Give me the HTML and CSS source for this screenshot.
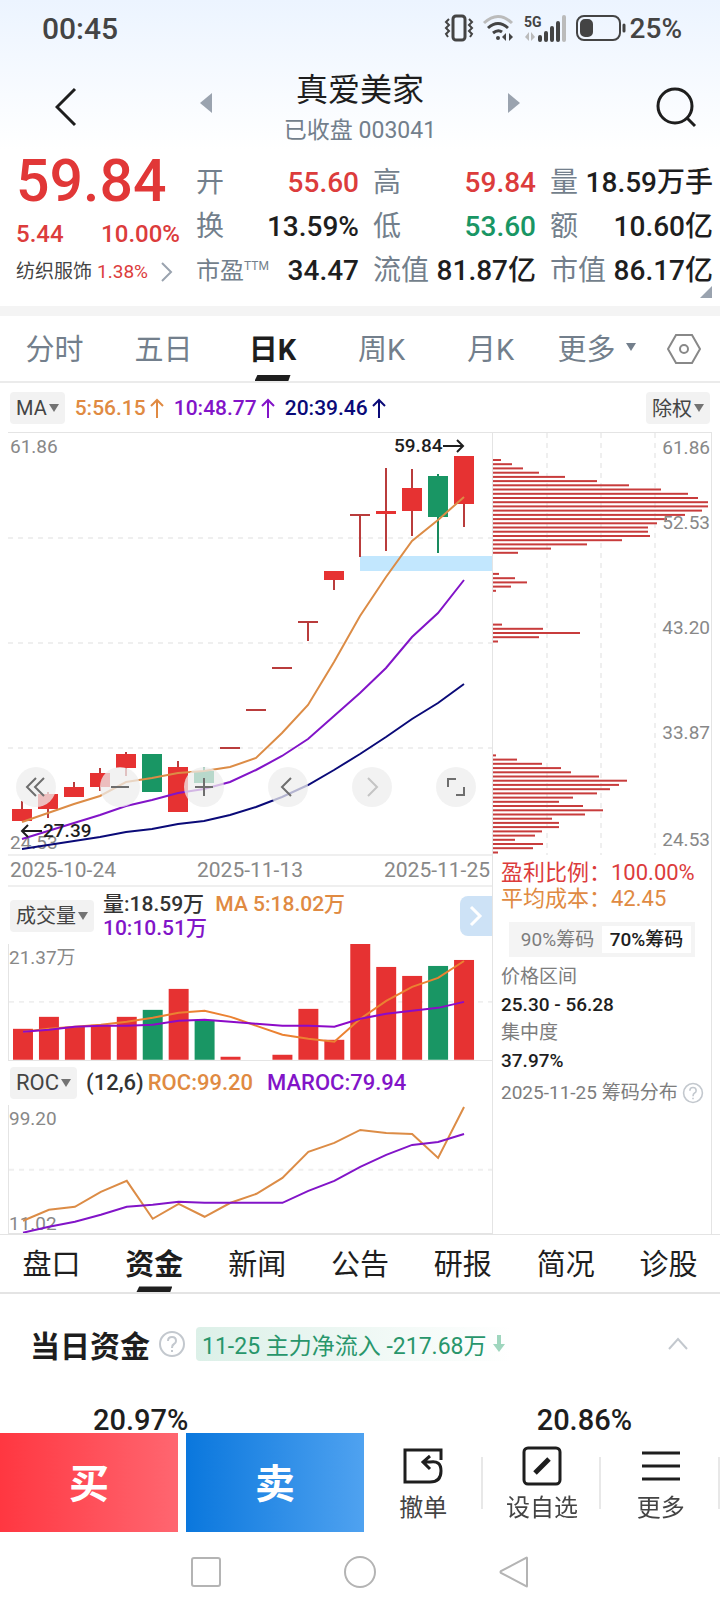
FILE: index.html
```
<!DOCTYPE html>
<html lang="zh-CN">
<head>
  <meta charset="UTF-8">
  <meta name="viewport" content="width=device-width, initial-scale=1">
  <title>真爱美家 003041</title>
  <link rel="stylesheet" href="styles.css">
</head>
<body>

<div class="status-bar">
  <span>00:45</span>
  <div class="status-icons">
    <svg width="30" height="28" viewBox="0 0 30 28" fill="none" stroke="#444" stroke-width="3">
      <rect x="9" y="2" width="12" height="24" rx="3"/>
      <path d="M5 5l-3 3 3 3-3 3 3 3-3 3 2 3M25 5l3 3-3 3 3 3-3 3 3 3-2 3" stroke-width="2"/>
    </svg>
    <svg width="34" height="28" viewBox="0 0 34 28" fill="none" stroke="#444" stroke-width="3">
      <path d="M2 9q14-13 28 0" stroke="#bbb"/>
      <path d="M6 14q10-9 20 0M11 19q5-4 9-1"/>
      <circle cx="16" cy="24" r="2" fill="#444" stroke="none"/>
      <path d="M24 19v8l-4-4zM27 19v8l4-4z" fill="#444" stroke="none"/>
    </svg>
    <svg width="44" height="28" viewBox="0 0 44 28">
      <text x="0" y="13" class="net-label">5G</text>
      <path d="M5 18v9l-4-4zM7 18v9l4-4z" fill="#bbb"/>
      <path d="M16 26v-3M22 26v-7M28 26V14M34 26V9" stroke="#444" stroke-width="4" stroke-linecap="round"/>
      <path d="M40 26V3" stroke="#bbb" stroke-width="4" stroke-linecap="round"/>
    </svg>
    <svg width="50" height="28" viewBox="0 0 50 28" fill="none" stroke="#444" stroke-width="2">
      <rect x="1" y="2" width="43" height="24" rx="7"/>
      <rect x="5" y="6" width="11" height="16" rx="4" fill="#444"/>
      <path d="M48 11v6" stroke-width="3" stroke-linecap="round"/>
    </svg>
    <span>25%</span>
  </div>
</div>

<header class="header">
  <button class="back" aria-label="返回"><svg width="22" height="40" viewBox="0 0 22 40"><path d="M20 2L2 20l18 18"/></svg></button>
  <button aria-label="上一只"><svg width="12" height="20" viewBox="0 0 12 20"><path d="M12 0v20L0 10z" class="tri"/></svg></button>
  <div class="title">
    <h1>真爱美家</h1>
    <p>已收盘 003041</p>
  </div>
  <button aria-label="下一只"><svg width="12" height="20" viewBox="0 0 12 20"><path d="M0 0v20l12-10z" class="tri"/></svg></button>
  <button class="search" aria-label="搜索"><svg width="42" height="42" viewBox="0 0 42 42"><circle cx="19" cy="19" r="17"/><path d="M31 31l8 8"/></svg></button>
</header>

<section class="quote">
  <div class="price-box">
    <div class="price">59.84</div>
    <div class="change"><span>5.44</span><span>10.00%</span></div>
    <a class="industry" href="#">纺织服饰 <span class="red">1.38%</span>
      <svg width="12" height="20" viewBox="0 0 12 20"><path d="M1 1l9 9-9 9"/></svg>
    </a>
  </div>
  <dl>
    <div><dt>开</dt><dd class="red">55.60</dd></div>
    <div><dt>高</dt><dd class="red">59.84</dd></div>
    <div><dt>量</dt><dd>18.59万手</dd></div>
    <div><dt>换</dt><dd>13.59%</dd></div>
    <div><dt>低</dt><dd class="green">53.60</dd></div>
    <div><dt>额</dt><dd>10.60亿</dd></div>
    <div><dt class="small">市盈<sup>TTM</sup></dt><dd>34.47</dd></div>
    <div><dt>流值</dt><dd>81.87亿</dd></div>
    <div><dt>市值</dt><dd>86.17亿</dd></div>
  </dl>
  <svg class="corner" width="12" height="12" viewBox="0 0 12 12"><path d="M12 0v12H0z"/></svg>
</section>

<nav class="period-tabs">
  <button>分时</button>
  <button>五日</button>
  <button class="active">日K</button>
  <button>周K</button>
  <button>月K</button>
  <button class="more">更多<i class="caret"></i></button>
  <button class="setting" aria-label="设置"><svg width="34" height="30" viewBox="0 0 34 30"><path d="M9 1h16l8 14-8 14H9L1 15z"/><circle cx="17" cy="15" r="4"/></svg></button>
</nav>

<div class="ma-row">
  <button class="chip">MA<i class="caret"></i></button>
  <span class="orange">5:56.15<svg class="up" width="14" height="20" viewBox="0 0 14 20"><path d="M7 20V2M1 8l6-6 6 6"/></svg></span>
  <span class="purple">10:48.77<svg class="up" width="14" height="20" viewBox="0 0 14 20"><path d="M7 20V2M1 8l6-6 6 6"/></svg></span>
  <span class="navy">20:39.46<svg class="up" width="14" height="20" viewBox="0 0 14 20"><path d="M7 20V2M1 8l6-6 6 6"/></svg></span>
  <button class="chip adjust">除权<i class="caret"></i></button>
</div>

<main class="charts">
  <div class="left">
    <div class="kline">
      <svg id="kline" viewBox="0 0 484 421">
        <path class="grid" d="M0 105H484M0 210H484M0 315H484"/>
        <text x="2" y="20" class="axis">61.86</text>
        <text x="2" y="416" class="axis">24.53</text>
        <rect x="352" y="123" width="132" height="15" class="gap-band"/>
        <g id="candles"></g>
        <text x="386" y="19" class="mark">59.84</text>
        <path class="mark-arrow" d="M435 13h20M449 7l6 6-6 6"/>
        <text x="35" y="404" class="mark">27.39</text>
        <path class="mark-arrow" d="M34 398H14M20 392l-6 6 6 6"/>
      </svg>
      <div class="tools">
        <button aria-label="最左"><svg viewBox="0 0 40 40"><path d="M20 11l-9 9 9 9M28 11l-9 9 9 9"/></svg></button>
        <button aria-label="缩小"><svg viewBox="0 0 40 40"><path d="M11 20h18"/></svg></button>
        <button aria-label="放大"><svg viewBox="0 0 40 40"><path d="M11 20h18M20 11v18"/></svg></button>
        <button aria-label="左移"><svg viewBox="0 0 40 40"><path d="M23 11l-9 9 9 9"/></svg></button>
        <button aria-label="右移" disabled><svg viewBox="0 0 40 40"><path d="M16 11l9 9-9 9"/></svg></button>
        <button aria-label="全屏"><svg viewBox="0 0 40 40"><path d="M12 20v-8h8M28 20v8h-8"/></svg></button>
      </div>
    </div>
    <div class="dates"><span>2025-10-24</span><span>2025-11-13</span><span>2025-11-25</span></div>

    <div class="vol-head">
      <button class="chip">成交量<i class="caret"></i></button>
      <p>量:18.59万 <span class="orange">MA 5:18.02万</span><br><span class="purple">10:10.51万</span></p>
      <button class="expand" aria-label="展开"><svg width="14" height="22" viewBox="0 0 14 22"><path d="M2 2l9 9-9 9"/></svg></button>
    </div>
    <svg id="volume" class="plot" viewBox="0 0 484 116">
      <path class="grid" d="M0 58H484"/>
      <text x="0" y="20" class="axis">21.37万</text>
    </svg>

    <div class="roc-head">
      <button class="chip">ROC<i class="caret"></i></button>
      <span>(12,6)</span><span class="orange">ROC:99.20</span><span class="purple">MAROC:79.94</span>
    </div>
    <svg id="roc" class="plot" viewBox="0 0 484 129">
      <path class="grid" d="M0 65H484"/>
      <text x="0" y="20" class="axis">99.20</text>
      <text x="0" y="125" class="axis">11.02</text>
    </svg>
  </div>

  <aside class="right">
    <svg id="chips" viewBox="0 0 218 422">
      <path class="grid" d="M54 0V422M108 0V422M162 0V422"/>
      <g id="chipBars"></g>
      <g class="axis end">
        <text x="217" y="21">61.86</text>
        <text x="217" y="96">52.53</text>
        <text x="217" y="201">43.20</text>
        <text x="217" y="306">33.87</text>
        <text x="217" y="413">24.53</text>
      </g>
    </svg>
    <div class="chip-info">
      <p class="big red">盈利比例：100.00%</p>
      <p class="big orange">平均成本：42.45</p>
      <div class="toggle"><button>90%筹码</button><button class="active">70%筹码</button></div>
      <p>价格区间</p>
      <p class="val">25.30 - 56.28</p>
      <p>集中度</p>
      <p class="val">37.97%</p>
      <p class="date">2025-11-25 筹码分布
        <svg class="help" width="22" height="22" viewBox="0 0 28 28"><circle cx="14" cy="14" r="12"/><path d="M10 11q0-4 4-4t4 4q0 2-2 3t-2 4M14 20v2"/></svg>
      </p>
    </div>
  </aside>
</main>

<nav class="info-tabs">
  <button>盘口</button>
  <button class="active">资金</button>
  <button>新闻</button>
  <button>公告</button>
  <button>研报</button>
  <button>简况</button>
  <button>诊股</button>
</nav>

<section class="funds">
  <div class="funds-head">
    <h2>当日资金</h2>
    <svg class="help" width="28" height="28" viewBox="0 0 28 28"><circle cx="14" cy="14" r="12"/><path d="M10 11q0-4 4-4t4 4q0 2-2 3t-2 4M14 20v2"/></svg>
    <span class="tag">11-25 主力净流入 -217.68万<svg width="12" height="18" viewBox="0 0 12 18"><path d="M4 0h4v9h4l-6 8-6-8h4z"/></svg></span>
    <button class="fold" aria-label="收起"><svg width="20" height="14" viewBox="0 0 20 14"><path d="M1 12l9-10 9 10"/></svg></button>
  </div>
  <div class="percents"><span>20.97%</span><span>20.86%</span></div>
</section>

<footer class="bottom">
  <div class="actions">
    <button class="buy">买</button>
    <button class="sell">卖</button>
    <div class="links">
      <button>
        <svg width="40" height="40" viewBox="0 0 40 40"><path d="M38 14V4H2v32h25q11 0 11-11T27 16h-6M27 10l-7 6 7 7"/></svg>
        撤单
      </button>
      <button>
        <svg width="40" height="40" viewBox="0 0 40 40"><rect x="2" y="2" width="36" height="36" rx="4"/><path d="M13 27l14-14" stroke-width="5"/></svg>
        设自选
      </button>
      <button>
        <svg width="40" height="40" viewBox="0 0 40 40"><path d="M1 7h38M1 20h38M1 33h38"/></svg>
        更多
      </button>
    </div>
  </div>
  <div class="sys-nav">
    <svg viewBox="0 0 32 32"><rect x="2" y="2" width="28" height="28" rx="2"/></svg>
    <svg viewBox="0 0 32 32"><circle cx="16" cy="16" r="15"/></svg>
    <svg viewBox="0 0 32 32"><path d="M29 2v28q0 1-1 0L3 17q-1-1 0-2L28 2q1-1 1 0z"/></svg>
  </div>
</footer>

<script>
  const RED = "#e63232", GREEN = "#199664";
  const STEP = 26, FIRST = 14, BAR = 20;

  // [high, bodyTop, bodyBottom, low, isDown]
  const candles = [
    [368, 376, 388, 388], [359, 361, 376, 385], [349, 354, 364, 364],
    [335, 340, 354, 358], [319, 321, 335, 343], [321, 321, 359, 359, 1],
    [328, 334, 379, 379], [334, 338, 350, 350, 1], [314, 314, 316, 316],
    [276, 276, 278, 278], [234, 234, 236, 236], [188, 188, 190, 208],
    [138, 138, 147, 157], [81, 81, 83, 124], [35, 78, 81, 118],
    [36, 55, 78, 103], [41, 43, 84, 120, 1], [23, 23, 71, 94]
  ];
  const volumes = [85, 73, 83, 81, 73, 66, 45, 76, 113, 116, 111, 65, 96, 0, 23, 32, 22, 16];

  const ma5 = [389, 380, 371, 363, 349, 345, 340, 338, 334, 325, 300, 272, 229, 183, 144, 108, 87, 64];
  const ma10 = [406, 398, 390, 382, 373, 367, 360, 356, 349, 337, 323, 306, 283, 260, 235, 204, 180, 147];
  const ma20 = [416, 412, 408, 404, 399, 396, 391, 388, 382, 374, 364, 352, 337, 321, 304, 286, 270, 251];
  const vol5 = [88, 85, 83, 81, 78, 74, 69, 67, 73, 82, 91, 95, 98, 75, 57, 43, 34, 17];
  const vol10 = [88, 86, 83, 82, 82, 81, 77, 76, 78, 80, 82, 82, 83, 75, 70, 67, 64, 58];
  const roc = [116, 105, 102, 87, 76, 114, 99, 112, 98, 89, 73, 47, 38, 25, 28, 29, 53, 2];
  const maroc = [128, 122, 117, 110, 102, 100, 97, 98, 98, 98, 98, 86, 76, 62, 50, 40, 37, 29];

  // row index -> bar widths
  const chips = {
    0: [8, 19, 30, 46, 72, 104, 136, 168, 195, 205, 215, 215, 209, 192, 174, 164, 155, 155, 157, 129, 94, 58, 25],
    27: [6, 22, 34, 18, 3],
    39: [9, 50, 87, 46, 5],
    70: [3, 24, 49, 68, 78, 106, 134, 126, 117, 104, 80, 66, 90, 110, 92, 59, 66, 66, 49, 42, 22, 50, 40, 5]
  };

  function add(parent, tag, attrs) {
    const el = document.createElementNS("http://www.w3.org/2000/svg", tag);
    for (const k in attrs) el.setAttribute(k, attrs[k]);
    document.getElementById(parent).appendChild(el);
  }

  function line(parent, data, color) {
    const points = data.map((y, i) => (FIRST + i * STEP) + "," + y).join(" ");
    add(parent, "polyline", { points, fill: "none", stroke: color, "stroke-width": 2 });
  }

  candles.forEach(([high, top, bottom, low, down], i) => {
    const x = FIRST + i * STEP;
    const fill = down ? GREEN : RED;
    add("candles", "rect", { x: x - 1, y: high, width: 2, height: low - high, fill: down ? "#198a5e" : "#b93c3c" });
    add("candles", "rect", { x: x - BAR / 2, y: top, width: BAR, height: bottom - top, fill: bottom - top < 3 ? "#b93c3c" : fill });
    add("volume", "rect", { x: x - BAR / 2, y: volumes[i], width: BAR, height: 116 - volumes[i], fill: down ? GREEN : RED });
  });

  line("candles", ma5, "#dc8c46");
  line("candles", ma10, "#8214c8");
  line("candles", ma20, "#0a0a78");
  line("volume", vol5, "#eb8232");
  line("volume", vol10, "#8c0ac8");
  line("roc", roc, "#dc8c46");
  line("roc", maroc, "#8214c8");

  for (const start in chips) {
    chips[start].forEach((w, i) => {
      const y = 26 + (Number(start) + i) * 4.22;
      add("chipBars", "rect", { x: 0, y: y.toFixed(1), width: w, height: 2, fill: "#c83c3c" });
    });
  }
</script>
</body>
</html>
```
FILE: styles.css
```
* {
  box-sizing: border-box;
}
body {
  margin: 0;
  padding-bottom: 172px;
  font-family: Roboto, "Noto Sans CJK SC", sans-serif;
  color: #1e1e1e;
  background: #fff linear-gradient(#ecf4ff, #fff 150px) no-repeat;
}
h1, h2, p, dl, dd {
  margin: 0;
}
button {
  padding: 0;
  border: none;
  background: none;
  font: inherit;
  color: inherit;
  cursor: pointer;
}
svg {
  display: block;
}
.red { color: #dc3c3c; }
.green { color: #199664; }
.orange { color: #e08a42; }
.purple { color: #8214c8; }
.navy { color: #0a0a78; }

/* status bar */
.status-bar {
  display: flex;
  justify-content: space-between;
  align-items: center;
  height: 56px;
  padding: 0 38px 0 42px;
  font-size: 30px;
  font-weight: 500;
  color: #444;
}
.status-icons {
  display: flex;
  align-items: center;
  gap: 8px;
}
.status-icons span {
  margin-left: -4px;
  font-size: 28px;
}
.net-label {
  font-size: 14px;
  font-weight: 700;
  fill: #444;
}

/* header */
.header {
  display: grid;
  grid-template-columns: 200px 12px 1fr 12px 200px;
  align-items: center;
  height: 94px;
}
.header svg {
  fill: none;
  stroke: #1e1e1e;
  stroke-width: 3;
}
.header .tri {
  fill: #9aa3af;
  stroke: none;
}
.back {
  padding-left: 55px;
  padding-top: 8px;
}
.search {
  padding-top: 10px;
  padding-right: 22px;
  justify-self: end;
}
.title {
  padding-top: 12px;
  text-align: center;
}
.title h1 {
  font-size: 32px;
  font-weight: 400;
  line-height: 44px;
}
.title p {
  font-size: 23px;
  line-height: 38px;
  color: #737f8c;
}

/* quote */
.quote {
  position: relative;
  display: grid;
  grid-template-columns: 164px 1fr;
  gap: 16px;
  height: 166px;
  padding: 0 7px 0 16px;
  border-bottom: 10px solid #f4f4f4;
}
.price {
  font-size: 59px;
  font-weight: 500;
  line-height: 62px;
  color: #e13737;
}
.change {
  display: flex;
  justify-content: space-between;
  font-size: 24px;
  font-weight: 500;
  line-height: 44px;
  color: #dc3c3c;
}
.industry {
  display: flex;
  align-items: center;
  gap: 5px;
  font-size: 19px;
  line-height: 32px;
  color: #444;
  text-decoration: none;
  white-space: nowrap;
}
.industry svg {
  margin-left: 8px;
  fill: none;
  stroke: #9aa3af;
  stroke-width: 2;
}
.quote dl {
  display: grid;
  grid-template-columns: repeat(3, 1fr);
  grid-auto-rows: 44px;
  column-gap: 14px;
  padding-top: 11px;
}
.quote dl div {
  display: flex;
  justify-content: space-between;
  line-height: 44px;
  font-size: 28px;
  white-space: nowrap;
}
.quote dt {
  color: #737f8c;
}
.quote dt.small {
  font-size: 24px;
}
.quote sup {
  font-size: 12px;
  line-height: 0;
}
.quote dd {
  font-weight: 500;
}
.corner {
  position: absolute;
  right: 8px;
  bottom: 8px;
  fill: #9aa3af;
}

/* tabs */
.period-tabs {
  display: grid;
  grid-template-columns: repeat(5, 109fr) 103fr 72fr;
  height: 67px;
  border-bottom: 2px solid #ebebeb;
  font-size: 29px;
  color: #737f8c;
}
.period-tabs button, .info-tabs button {
  position: relative;
  padding-bottom: 4px;
}
.period-tabs .active, .info-tabs .active {
  font-weight: 700;
  color: #1e1e1e;
}
.active::after {
  content: "";
  position: absolute;
  left: calc(50% - 18px);
  bottom: 0;
  width: 36px;
  height: 6px;
  background: #1e1e1e;
  clip-path: polygon(8% 0, 100% 0, 94% 100%, 0 100%);
}
.caret {
  display: inline-block;
  border: 5px solid transparent;
  border-top: 8px solid #737f8c;
  border-bottom: 0;
}
.more {
  display: flex;
  align-items: center;
  justify-content: center;
  gap: 10px;
}
.setting svg {
  margin-left: 19px;
  margin-top: 4px;
  fill: none;
  stroke: #888;
  stroke-width: 2;
}

.chip {
  display: flex;
  align-items: center;
  gap: 2px;
  height: 32px;
  padding: 0 6px;
  border-radius: 4px;
  background: #f2f2f2;
  font-size: 20px;
  color: #444;
  white-space: nowrap;
}
.chip .caret {
  border-top-color: #737373;
}
.ma-row {
  display: flex;
  align-items: center;
  gap: 10px;
  height: 49px;
  padding: 0 10px;
  font-size: 21px;
  font-weight: 500;
}
.ma-row span {
  display: flex;
  align-items: center;
  gap: 4px;
}
.ma-row .chip {
  font-weight: 400;
}
.up {
  fill: none;
  stroke: currentColor;
  stroke-width: 2;
}
.adjust {
  margin-left: auto;
}

/* charts */
.charts {
  display: grid;
  grid-template-columns: 484fr 220fr;
  margin: 0 8px;
  border-top: 1px solid #e4e4e4;
}
.charts svg {
  width: 100%;
}
.grid {
  fill: none;
  stroke: #efefef;
  stroke-width: 2;
  stroke-dasharray: 5 5;
}
.axis {
  font-size: 19px;
  fill: #888;
}
.end {
  text-anchor: end;
}
.mark {
  font-size: 19px;
  font-weight: 500;
  fill: #1e1e1e;
}
.mark-arrow {
  fill: none;
  stroke: #1e1e1e;
  stroke-width: 2;
}
.gap-band {
  fill: #c2e7fe;
}
.kline {
  position: relative;
  border-bottom: 2px solid #efefef;
}
.tools {
  position: absolute;
  left: 8px;
  right: 16px;
  bottom: 47px;
  display: flex;
  justify-content: space-between;
}
.tools button {
  width: 40px;
  height: 40px;
  border-radius: 50%;
  background: rgba(238, 238, 238, 0.75);
}
.tools svg {
  fill: none;
  stroke: #6e6e6e;
  stroke-width: 2;
}
.tools button:disabled svg {
  stroke: #c4c4c4;
}
.dates {
  display: flex;
  justify-content: space-between;
  padding: 0 2px;
  border-bottom: 2px solid #efefef;
  font-size: 21px;
  line-height: 29px;
  color: #888;
}
.vol-head {
  display: flex;
  align-items: center;
  height: 57px;
  padding-left: 2px;
  font-size: 21px;
  font-weight: 500;
  line-height: 24px;
  color: #333;
}
.vol-head p {
  margin-left: 9px;
}
.vol-head .orange {
  margin-left: 6px;
}
.vol-head .chip, .roc-head .chip {
  font-weight: 400;
}
.expand {
  display: flex;
  align-items: center;
  justify-content: center;
  width: 32px;
  height: 40px;
  margin-left: auto;
  border-radius: 8px 0 0 8px;
  background: #cde2f6;
}
.expand svg {
  width: 14px;
  fill: none;
  stroke: #fff;
  stroke-width: 3;
}
.plot {
  border-left: 1px solid #e4e4e4;
  border-bottom: 1px solid #e4e4e4;
}
.roc-head {
  display: flex;
  align-items: center;
  height: 44px;
  padding-left: 2px;
  font-size: 22px;
  font-weight: 500;
  color: #333;
}
.roc-head .chip {
  margin-right: 9px;
  font-size: 22px;
}
.roc-head .orange {
  margin: 0 14px 0 4px;
}

/* chip distribution */
.right {
  border-left: 1px solid #e4e4e4;
  border-right: 1px solid #e4e4e4;
}
.chip-info {
  padding: 5px 0 0 8px;
  font-size: 19px;
  line-height: 28px;
  color: #7d7d7d;
  white-space: nowrap;
}
.chip-info .big {
  font-size: 22px;
  line-height: 26px;
}
.chip-info .val {
  font-weight: 500;
  color: #1e1e1e;
}
.toggle {
  display: flex;
  margin: 10px 16px 6px 8px;
  padding: 4px;
  background: #f4f4f4;
}
.toggle button {
  flex: 1;
  height: 27px;
  line-height: 27px;
}
.toggle .active {
  background: #fff;
  font-weight: 500;
  color: #1e1e1e;
}
.toggle .active::after {
  content: none;
}
.chip-info .date {
  display: flex;
  align-items: center;
  gap: 4px;
  margin-top: 4px;
}
.help {
  fill: none;
  stroke: #c3c8ce;
  stroke-width: 2;
}
.charts .help {
  width: 22px;
}

.info-tabs {
  display: flex;
  height: 60px;
  border-top: 1px solid #e4e4e4;
  border-bottom: 2px solid #e4e4e4;
  font-size: 29px;
}
.info-tabs button {
  flex: 1;
}

/* funds */
.funds-head {
  display: flex;
  align-items: center;
  height: 100px;
  padding: 0 32px 0 30px;
}
.funds-head h2 {
  margin-right: 8px;
  font-size: 30px;
}
.tag {
  display: flex;
  align-items: center;
  gap: 6px;
  height: 34px;
  margin-left: 10px;
  padding: 0 6px;
  border-radius: 4px;
  background: linear-gradient(90deg, #dcf0e8, #fff);
  font-size: 23px;
  color: #28966b;
}
.tag svg {
  fill: #9fd6be;
}
.fold {
  margin-left: auto;
}
.fold svg {
  fill: none;
  stroke: #c3c8ce;
  stroke-width: 2;
}
.percents {
  display: flex;
  justify-content: space-between;
  padding: 7px 88px 0 93px;
  font-size: 29px;
  font-weight: 500;
  line-height: 38px;
}

/* bottom */
.bottom {
  position: fixed;
  left: 0;
  right: 0;
  bottom: 0;
  background: #fff;
}
.actions {
  display: grid;
  grid-template-columns: 178fr 178fr 348fr;
  column-gap: 8px;
  height: 99px;
}
.buy, .sell {
  padding-bottom: 4px;
  font-size: 40px;
  font-weight: 700;
  color: #fff;
}
.buy {
  background: linear-gradient(90deg, #ff3741, #ff6670);
}
.sell {
  background: linear-gradient(90deg, #0a77dd, #4fa2f0);
}
.links {
  display: flex;
  align-items: center;
  margin-left: -8px;
}
.links button {
  flex: 1;
  display: flex;
  flex-direction: column;
  align-items: center;
  gap: 6px;
  padding-top: 4px;
  font-size: 24px;
  line-height: 32px;
  color: #444;
  background: linear-gradient(#e8e8e8, #e8e8e8) right / 2px 52px no-repeat;
}
.links svg {
  fill: none;
  stroke: #1e1e1e;
  stroke-width: 3;
}
.sys-nav {
  display: flex;
  align-items: center;
  justify-content: center;
  gap: 122px;
  height: 80px;
}
.sys-nav svg {
  width: 32px;
  height: 32px;
  fill: none;
  stroke: #b4b4b4;
  stroke-width: 2;
}
```
